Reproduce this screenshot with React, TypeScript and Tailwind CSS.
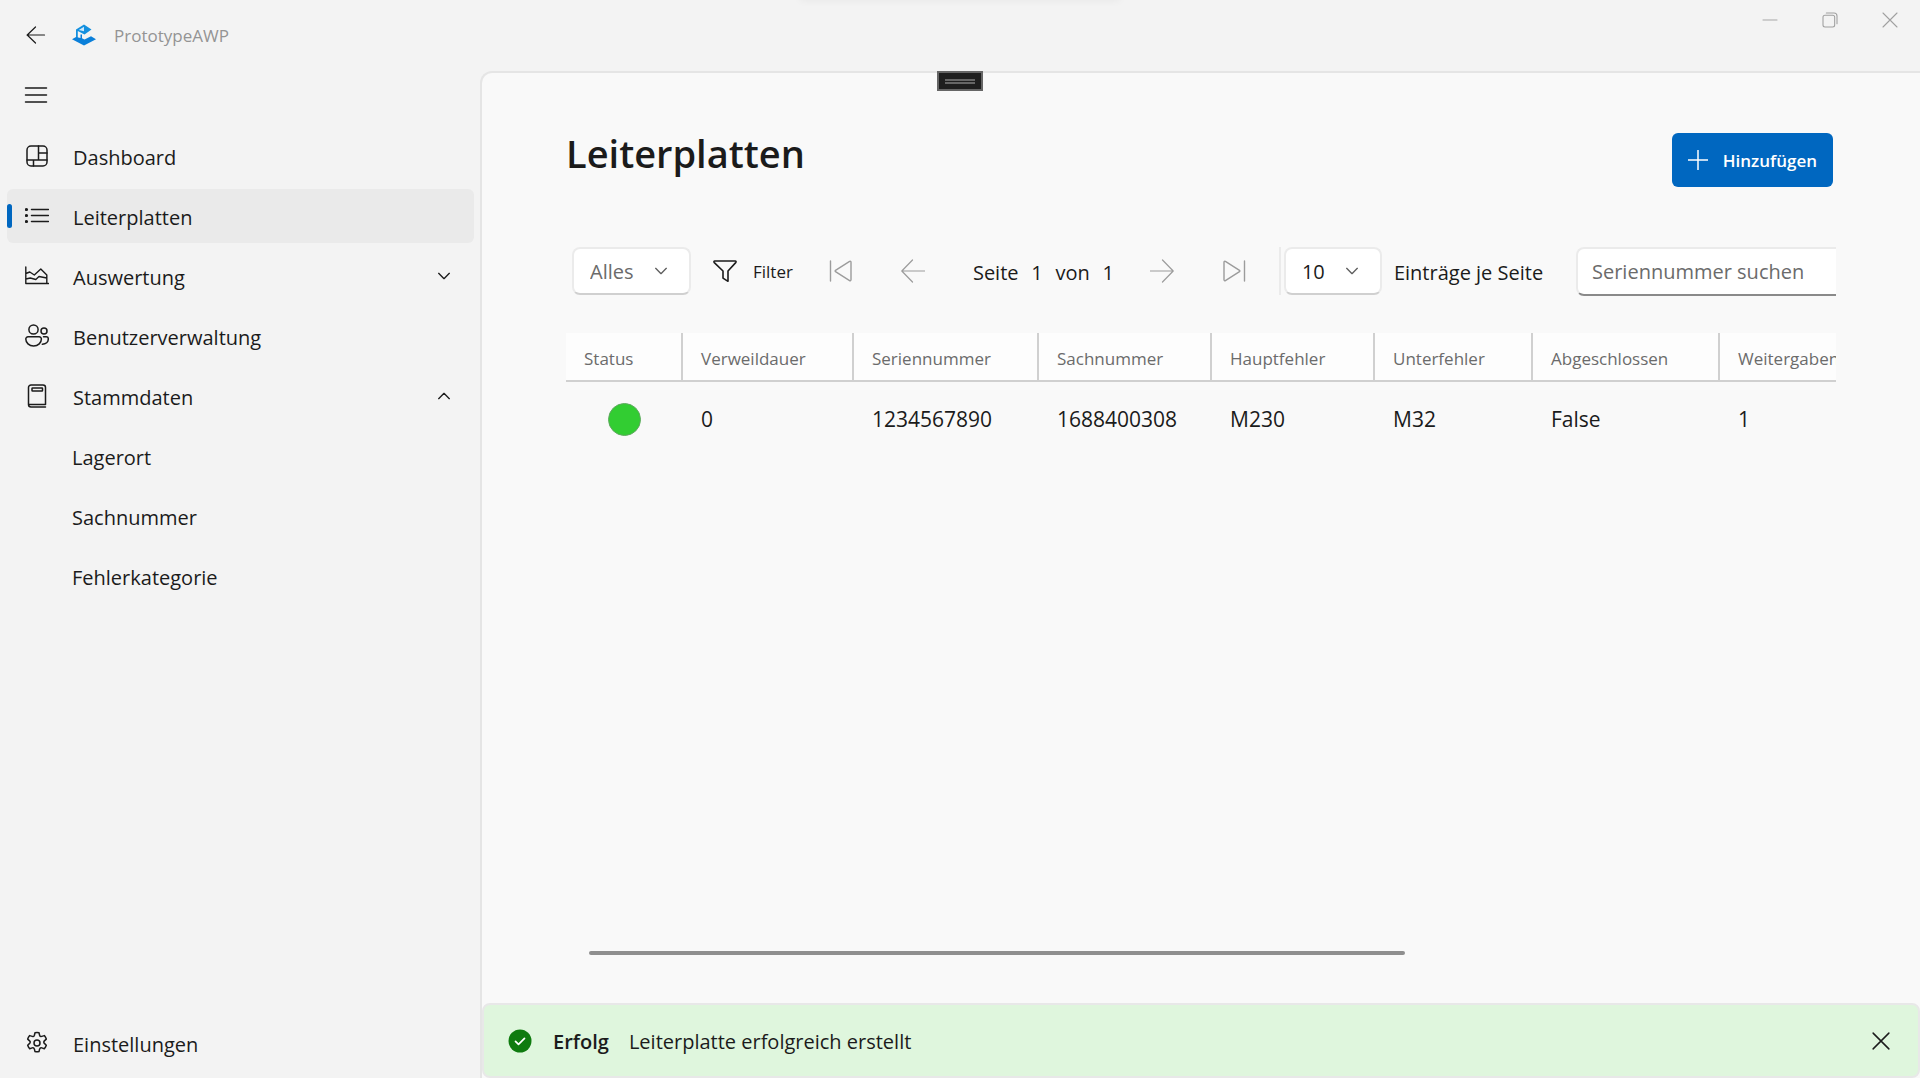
import { useState } from "react";
import type { ReactNode } from "react";

type IconProps = { children: ReactNode; size?: string; width?: number };

function Icon({ children, size = "size-6", width = 1.5 }: IconProps) {
  return (
    <svg
      viewBox="0 0 24 24"
      className={`${size} shrink-0`}
      fill="none"
      stroke="currentColor"
      strokeWidth={width}
      strokeLinecap="round"
      strokeLinejoin="round"
      aria-hidden="true"
    >
      {children}
    </svg>
  );
}

const DashboardIcon = () => (
  <Icon>
    <rect x="2" y="2" width="20" height="20" rx="4" />
    <path d="M13.5 2v14M13.5 9H22M2 16h20M8.5 16v6" />
  </Icon>
);

const ListIcon = () => (
  <Icon>
    <path d="M6.5 5.5h17M6.5 11.5h17M6.5 17.5h17" />
    <g fill="currentColor" stroke="none">
      <circle cx="1.5" cy="5.5" r="1.6" />
      <circle cx="1.5" cy="11.5" r="1.6" />
      <circle cx="1.5" cy="17.5" r="1.6" />
    </g>
  </Icon>
);

const ChartIcon = () => (
  <Icon width={1.4}>
    <path d="M.8 3v16.5H23.4M.8 9.5l4-1.5 4.5 3L15.8 5l6 6v8.5M.8 15l4.5-1 5.5 1.500L14 12.500l7.800 1.500" />
  </Icon>
);

const PeopleIcon = () => (
  <Icon>
    <circle cx="8.5" cy="5.5" r="4.6" />
    <circle cx="19" cy="7" r="3" />
    <path d="M3 12.800h11.200a2.200 2.200 0 0 1 2.200 2.200c0 3.600-3.200 7-7.800 7S.8 18.600.8 15a2.200 2.200 0 0 1 2.200-2.200zM18.500 12.800h2.800a2 2 0 0 1 2 2c0 3.200-2.400 5.400-6 5.400" />
  </Icon>
);

const NotebookIcon = () => (
  <Icon>
    <path d="M20.500 20.500V3.500A2.500 2.500 0 0 0 18 1H6a2.500 2.500 0 0 0-2.500 2.500v17A2.500 2.500 0 0 0 6 23h14.500M3.500 20.500h17" />
    <rect x="7" y="4" width="10.5" height="3" rx=".5" />
  </Icon>
);

const GearIcon = () => (
  <Icon width={1.5}>
    <circle cx="12" cy="12" r="3" />
    <path d="M10 1.700a10.500 10.500 0 0 1 4 0l.6 2.500c.3 1 1.200 1.500 2.200 1.200l2.500-.8a10.500 10.500 0 0 1 2 3.500l-1.900 1.800c-.8.800-.8 1.800 0 2.500l1.900 1.800a10.500 10.500 0 0 1-2 3.500l-2.500-.8c-1-.3-1.900.2-2.200 1.200l-.6 2.500a10.500 10.500 0 0 1-4 0l-.6-2.500c-.3-1-1.200-1.500-2.200-1.200l-2.500.8a10.500 10.500 0 0 1-2-3.500l1.900-1.800c.8-.8.800-1.800 0-2.500L2.700 8.100a10.500 10.500 0 0 1 2-3.500l2.500.8c1 .3 1.900-.2 2.200-1.200z" />
  </Icon>
);

const FilterIcon = () => (
  <Icon width={1.6}>
    <path d="M1.800 2h20.400c.9 0 1.100.8.5 1.600L15 12v10.300l-5-3.200V12L1.300 3.600C.7 2.800.9 2 1.800 2z" />
  </Icon>
);

const Chevron = ({ up = false }: { up?: boolean }) => (
  <Icon size="size-4" width={2}>
    <path d={up ? "M4 16l8-8 8 8" : "M4 8l8 8 8-8"} />
  </Icon>
);

const CloseGlyph = () => <path d="M1.500 1.500l21 21M22.500 1.500l-21 21" />;

const AppLogo = () => (
  <svg viewBox="0 0 24 22" className="h-[22px] w-6 shrink-0" aria-hidden="true">
    <path d="M12 .5l7.500 5-7 5L5.800 7v8H4V5.500z" fill="#1490df" />
    <path d="M12 2.800v4.400L6.800 5.900z" fill="#cfe8fa" />
    <path d="M0 15.300l4-2.300 4.500 1V10.500h1.500v3.800l2.500 1.200L19 12.200l5 3L12 21.500z" fill="#0a7fd9" />
  </svg>
);

type NavEntry = { label: string; icon?: ReactNode; active?: boolean; expand?: "up" | "down" };

const NAV: NavEntry[] = [
  { label: "Dashboard", icon: <DashboardIcon /> },
  { label: "Leiterplatten", icon: <ListIcon />, active: true },
  { label: "Auswertung", icon: <ChartIcon />, expand: "down" },
  { label: "Benutzerverwaltung", icon: <PeopleIcon /> },
  { label: "Stammdaten", icon: <NotebookIcon />, expand: "up" },
  { label: "Lagerort" },
  { label: "Sachnummer" },
  { label: "Fehlerkategorie" },
];

function NavItem({ label, icon, active, expand }: NavEntry) {
  return (
    <button
      type="button"
      aria-current={active ? "page" : undefined}
      aria-expanded={expand ? expand === "up" : undefined}
      className={`relative flex h-[54px] w-full items-center rounded-md pr-[22px] text-left ${
        icon ? "gap-6 pl-[18px]" : "pl-[65px]"
      } ${active ? "bg-[#eaeaea]" : ""}`}
    >
      {active && <span className="absolute left-0 h-6 w-[5px] rounded-full bg-[#0067c0]" />}
      {icon}
      <span className="grow pt-1">{label}</span>
      {expand && <Chevron up={expand === "up"} />}
    </button>
  );
}

const COLUMNS = [
  { title: "Status", width: "w-[117px]" },
  { title: "Verweildauer", width: "w-[171px]" },
  { title: "Seriennummer", width: "w-[185px]" },
  { title: "Sachnummer", width: "w-[173px]" },
  { title: "Hauptfehler", width: "w-[163px]" },
  { title: "Unterfehler", width: "w-[158px]" },
  { title: "Abgeschlossen", width: "w-[187px]" },
  { title: "Weitergaben", width: "w-[170px]" },
];

const ROWS = [["0", "1234567890", "1688400308", "M230", "M32", "False", "1"]];

type DropdownProps = { label: string; options: string[]; tone: string; width: string };

function Dropdown({ label, options, tone, width }: DropdownProps) {
  return (
    <div className={`relative flex shrink-0 items-center ${width}`}>
      <select
        aria-label={label}
        className={`h-12 w-full appearance-none rounded-lg border-2 border-[#ebebeb] border-b-[#d0d0d0] bg-white pt-0.5 pl-4 ${tone}`}
      >
        {options.map((o) => (
          <option key={o}>{o}</option>
        ))}
      </select>
      <span className="pointer-events-none absolute right-[22px] text-[#5f5f5f]">
        <Chevron />
      </span>
    </div>
  );
}

function PagerButton({ label, children, width = 1.2 }: { label: string; children: ReactNode; width?: number }) {
  return (
    <button type="button" aria-label={label} className="text-[#9c9c9c]">
      <Icon width={width}>{children}</Icon>
    </button>
  );
}

export default function App() {
  const [query, setQuery] = useState("");
  const [noticeOpen, setNoticeOpen] = useState(true);

  return (
    <div className="relative flex min-h-screen flex-col overflow-hidden bg-[#f3f3f3] font-['Open_Sans','Noto_Sans',sans-serif] text-[20px] leading-7 text-[#1b1b1b]">
      <div className="absolute -top-2 left-1/2 h-2 w-[320px] -translate-x-1/2 shadow-[0_0_8px_rgba(0,0,0,0.06)]" />
      <div className="absolute top-[71px] left-1/2 flex h-5 w-[46px] -translate-x-1/2 flex-col justify-center gap-px border-2 border-[#666] bg-[#1f1f1f] px-1.5">
        <span className="h-0.5 bg-[#666]" />
        <span className="h-0.5 bg-[#666]" />
      </div>

      <header className="flex h-[71px] shrink-0 items-start justify-between">
        <div className="flex h-[71px] items-center pl-6">
          <button type="button" aria-label="Zurück" className="pb-0.5">
            <Icon width={1.2}>
              <path d="M20.500 12H3M11.500 4L3.200 12l8.300 8" />
            </Icon>
          </button>
          <span className="pr-[18px] pb-0.5 pl-6">
            <AppLogo />
          </span>
          <span className="text-[17px] text-[#949494]">PrototypeAWP</span>
        </div>
        <div className="flex h-10 items-center text-[#a0a0a0]">
          <button type="button" aria-label="Minimieren" className="flex w-[60px] justify-center">
            <Icon size="size-4" width={1.4}>
              <path d="M1.500 12h21" />
            </Icon>
          </button>
          <button type="button" aria-label="Wiederherstellen" className="flex w-[60px] justify-center">
            <Icon size="size-4" width={1.6}>
              <rect x="1.5" y="5" width="17.5" height="17.5" rx="3" />
              <path d="M6.500 1.500H18a4.500 4.500 0 0 1 4.500 4.500v11.500" />
            </Icon>
          </button>
          <button type="button" aria-label="Schließen" className="flex w-[60px] justify-center">
            <Icon size="size-4" width={1.6}>
              <CloseGlyph />
            </Icon>
          </button>
        </div>
      </header>

      <div className="flex grow">
        <aside className="flex w-[480px] shrink-0 flex-col pr-1.5 pb-2 pl-[7px]">
          <button
            type="button"
            aria-label="Navigation umschalten"
            className="mb-1 flex h-[54px] items-center self-start pr-4 pb-1.5 pl-[17px]"
          >
            <Icon>
              <path d="M1.500 5h21M1.500 12h21M1.500 19h21" />
            </Icon>
          </button>
          <nav className="flex flex-col gap-1.5">
            {NAV.map((item) => (
              <NavItem key={item.label} {...item} />
            ))}
          </nav>
          <div className="mt-auto">
            <NavItem label="Einstellungen" icon={<GearIcon />} />
          </div>
        </aside>

        <main className="flex min-w-0 grow flex-col overflow-hidden rounded-tl-xl border-t-2 border-l-2 border-[#e5e5e5] bg-[#f9f9f9]">
          <div className="flex grow flex-col px-[84px] pt-[52px]">
            <div className="flex items-start justify-between pr-[3px]">
              <h1 className="text-[38px] leading-[56px] font-semibold">Leiterplatten</h1>
              <button
                type="button"
                className="mt-2 flex h-[54px] items-center gap-[15px] rounded-md bg-[#0067c0] px-4 text-[17px] font-semibold text-white"
              >
                <Icon size="size-5" width={1.8}>
                  <path d="M12 .5v23M.5 12h23" />
                </Icon>
                <span className="pt-0.5">Hinzufügen</span>
              </button>
            </div>

            <div className="mt-[59px] flex h-[50px] items-center overflow-hidden pl-1.5 whitespace-nowrap">
              <Dropdown label="Auswahl" options={["Alles"]} tone="text-[#6b6b6b]" width="w-[119px]" />
              <button type="button" className="ml-[22px] flex items-center gap-4 text-[17px]">
                <FilterIcon />
                <span className="pt-0.5">Filter</span>
              </button>
              <div className="ml-9 flex shrink-0 items-center gap-12">
                <PagerButton label="Erste Seite" width={1.4}>
                  <path d="M1.500 2v20M22 3.200v17.600c0 .8-.8 1.200-1.400.8L6.500 12.700a.9.900 0 0 1 0-1.400L20.600 2.400c.6-.4 1.400 0 1.400.8z" />
                </PagerButton>
                <PagerButton label="Vorherige Seite">
                  <path d="M23.500 12H1M11.500 1L.8 12l10.700 11" />
                </PagerButton>
                <p className="flex w-[141px] justify-between pt-1">
                  <span>Seite</span>
                  <span>1</span>
                  <span>von</span>
                  <span>1</span>
                </p>
              </div>
              <div className="ml-9 flex shrink-0 items-center gap-12">
                <PagerButton label="Nächste Seite">
                  <path d="M.5 12H23M12.500 1l10.700 11-10.700 11" />
                </PagerButton>
                <PagerButton label="Letzte Seite" width={1.4}>
                  <path d="M22.500 2v20M2 3.200v17.600c0 .8.8 1.200 1.400.8l14.100-8.900a.9.900 0 0 0 0-1.400L3.400 2.400C2.800 2 2 2.400 2 3.200z" />
                </PagerButton>
              </div>
              <span className="ml-[33px] h-12 w-0.5 shrink-0 bg-[#ebebeb]" />
              <div className="ml-[3px] flex shrink-0 items-center gap-3">
                <Dropdown label="Einträge je Seite" options={["10", "25", "50"]} tone="text-[#1b1b1b]" width="w-[98px]" />
                <span className="pt-1">Einträge je Seite</span>
              </div>
              <input
                type="text"
                aria-label="Seriennummer suchen"
                placeholder="Seriennummer suchen"
                value={query}
                onChange={(e) => setQuery(e.target.value)}
                className="ml-auto h-[49px] w-[260px] shrink-0 rounded-l-lg border-2 border-r-0 border-[#ebebeb] border-b-[#8a8a8a] bg-white pl-3.5 placeholder:text-[#6b6b6b]"
              />
            </div>

            <div className="mt-[37px] overflow-hidden">
              <table className="w-[1324px] table-fixed border-separate border-spacing-0 text-left">
                <thead>
                  <tr className="h-[49px] bg-[#fdfdfd] text-[17px] text-[#6b6b6b]">
                    {COLUMNS.map((c) => (
                      <th
                        key={c.title}
                        scope="col"
                        className={`border-r-2 border-b-2 border-[#d0d0d0] pt-1 pl-[18px] font-normal ${c.width}`}
                      >
                        {c.title}
                      </th>
                    ))}
                  </tr>
                </thead>
                <tbody>
                  {ROWS.map((row) => (
                    <tr key={row[1]} className="h-[74px] text-[21px]">
                      <td>
                        <span className="mx-auto block size-[33px] rounded-full border border-[#5fa85f] bg-[#32cd32]" />
                      </td>
                      {row.map((cell, i) => (
                        <td key={COLUMNS[i + 1].title} className="pl-[18px]">
                          {cell}
                        </td>
                      ))}
                    </tr>
                  ))}
                </tbody>
              </table>
            </div>

            <div className="mt-auto mb-12 px-[23px]">
              <div className="h-1 w-2/3 rounded-full bg-[#8f8f8f]" />
            </div>
          </div>

          {noticeOpen && (
            <div
              role="status"
              className="flex h-[75px] shrink-0 items-center rounded-lg border-2 border-[#e8e8e8] bg-[#dff6dd] px-6"
            >
              <svg viewBox="0 0 24 24" className="size-6 shrink-0" aria-hidden="true">
                <circle cx="12" cy="12" r="11.5" fill="#0f7b0f" />
                <path
                  d="M7.500 12.300l3 3 6-6"
                  fill="none"
                  stroke="#fff"
                  strokeWidth="1.7"
                  strokeLinecap="round"
                  strokeLinejoin="round"
                />
              </svg>
              <span className="pt-0.5 pl-[21px] font-semibold">Erfolg</span>
              <span className="pt-0.5 pl-5">Leiterplatte erfolgreich erstellt</span>
              <button type="button" aria-label="Meldung schließen" className="mr-1 ml-auto" onClick={() => setNoticeOpen(false)}>
                <Icon size="size-[18px]" width={2}>
                  <CloseGlyph />
                </Icon>
              </button>
            </div>
          )}
        </main>
      </div>
    </div>
  );
}
